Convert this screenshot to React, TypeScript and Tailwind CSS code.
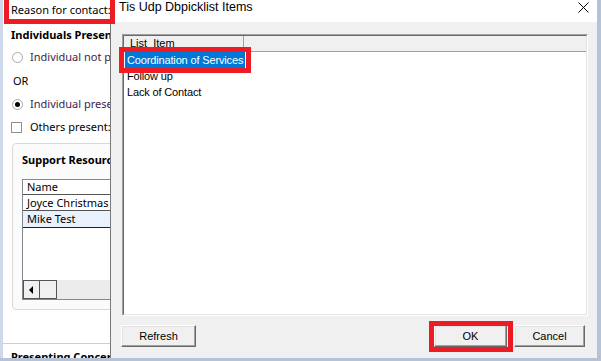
import { ReactNode } from 'react';

const winFont = { fontFamily: '"Liberation Sans", Arial, sans-serif' };
const appFont = { fontFamily: '"Noto Sans", "Open Sans", sans-serif' };

const RedBox = ({ className }: { className: string }) => (
  <div className={`absolute border-[5px] border-[#ed1c24] pointer-events-none ${className}`} />
);

const Radio = ({ checked, label }: { checked?: boolean; label: string }) => (
  <div className="flex items-center h-[16px] leading-[16px]">
    <span className="ml-[9px] w-[11px] h-[11px] rounded-full border border-[#a9a9a9] bg-white flex items-center justify-center">
      {checked && <span className="w-[5px] h-[5px] rounded-full bg-black" />}
    </span>
    <span className="ml-[7px] text-[#3a2552] whitespace-nowrap">{label}</span>
  </div>
);

const WinButton = ({ children, className }: { children: ReactNode; className: string }) => (
  <button
    className={`h-[22px] bg-[#f0f0f0] border-t border-l border-white border-r border-b border-r-[#696969] border-b-[#696969] shadow-[inset_-1px_-1px_0_#a0a0a0,inset_1px_1px_0_#e3e3e3] text-[11px] text-black ${className}`}>
    {children}
  </button>
);

const BackgroundForm = () => {
  const people = ['Joyce Christmas', 'Mike Test'];
  return (
    <div
      className="flex-1 h-[358px] bg-white flex flex-col [&>*]:shrink-0 text-[11px] text-black overflow-hidden"
      style={appFont}>
      <div className="h-[24px] pt-[2px] pl-[8px] leading-[16px] whitespace-nowrap">Reason for contact:</div>
      <div className="mt-[3px] pl-[8px] leading-[16px] font-bold whitespace-nowrap">Individuals Present</div>
      <div className="mt-[6px]">
        <Radio label="Individual not present" />
      </div>
      <div className="mt-[8px] pl-[10px] leading-[16px]">OR</div>
      <div className="mt-[7px]">
        <Radio checked label="Individual present" />
      </div>
      <div className="mt-[7px] flex items-center h-[16px] leading-[16px]">
        <span className="ml-[8px] w-[11px] h-[11px] border border-[#8f8f8f] bg-white" />
        <span className="ml-[8px] whitespace-nowrap">Others present:</span>
      </div>
      <div className="mt-[8px] ml-[9px] h-[167px] w-[200px] rounded-[4px] border border-[#d9d9d9] bg-[#fbfbfb] pt-[8px] pl-[9px]">
        <div className="leading-[16px] font-bold whitespace-nowrap">Support Resources</div>
        <div className="mt-[11px] h-[121px] border border-[#828790] bg-white flex flex-col">
          <div className="h-[15px] leading-[14px] pl-[4px] border-b border-[#555]">Name</div>
          <div className="h-[16px] leading-[15px] pl-[4px] border-b border-[#555] whitespace-nowrap">{people[0]}</div>
          <div className="h-[17px] leading-[15px] pl-[4px] border-b border-[#222] bg-[#e8f1fc] whitespace-nowrap">
            {people[1]}
          </div>
          <div className="flex-1" />
          <div className="h-[19px] flex bg-[#ececec]">
            <div className="w-[17px] border border-[#555] bg-[#f0f0f0] flex items-center justify-center">
              <svg width="5" height="8" viewBox="0 0 5 8">
                <path d="M4 0 L0 4 L4 8 Z" fill="#000" />
              </svg>
            </div>
            <div className="w-[17px] border-y border-r border-[#555] bg-[#f0f0f0]" />
          </div>
        </div>
      </div>
      <div className="mt-[33px] border-t border-[#cfcfcf] h-0" />
      <div className="mt-[5px] pl-[8px] leading-[16px] font-bold whitespace-nowrap">Presenting Concerns</div>
    </div>
  );
};

const PicklistDialog = () => {
  const items = ['Coordination of Services', 'Follow up', 'Lack of Contact'];
  return (
    <div
      className="absolute left-[110px] top-0 w-[487px] h-[358px] bg-[#f0f0f0] border-l border-[#7a7a7a] flex flex-col"
      style={winFont}>
      <div className="h-[22px] bg-white flex items-start justify-between shrink-0">
        <span className="pl-[8px] text-[12.5px] leading-[15px] text-black whitespace-nowrap">Tis Udp Dbpicklist Items</span>
        <svg className="mt-[2px] mr-[8px]" width="11" height="11" viewBox="0 0 11 11">
          <path d="M0.5 0.5 L10.5 10.5 M10.5 0.5 L0.5 10.5" stroke="#000" strokeWidth="1" />
        </svg>
      </div>
      <div className="ml-[11px] mr-[9px] mt-[12px] h-[282px] border-t border-l border-[#a0a0a0] border-r border-b border-r-white border-b-white shrink-0">
        <div className="h-full border-t border-l border-[#696969] border-r border-b border-r-[#e3e3e3] border-b-[#e3e3e3] bg-white flex flex-col text-[11px] text-black">
          <div className="h-[16px] flex bg-[#f0f0f0] border-b border-[#a0a0a0] shrink-0">
            <div className="w-[120px] border-r border-[#a0a0a0] pl-[6px] leading-[14px]">List_Item</div>
          </div>
          {items.map((item, index) => (
            <div key={item} className="h-[16px] pl-[1px] flex shrink-0">
              <span
                className={`w-[120px] pl-[2px] leading-[16px] tracking-[-0.15px] whitespace-nowrap ${
                  index === 0 ? 'bg-[#0078d7] text-white' : 'text-black'
                }`}>
                {item}
              </span>
            </div>
          ))}
        </div>
      </div>
      <div className="mt-[9px] flex items-start pl-[10px] pr-[12px]">
        <WinButton className="w-[75px]">Refresh</WinButton>
        <div className="flex-1" />
        <WinButton className="w-[73px]">OK</WinButton>
        <WinButton className="w-[71px] ml-[7px]">Cancel</WinButton>
      </div>
    </div>
  );
};

export default function App() {
  return (
    <div className="relative w-[601px] h-[361px] overflow-hidden bg-[#b7c2d9] flex items-start">
      <div className="w-[3px] h-[358px] bg-[#cdd8ea]" />
      <BackgroundForm />
      <div className="w-[4px]" />
      <PicklistDialog />
      <RedBox className="left-[4px] top-[-5px] w-[111px] h-[29px]" />
      <RedBox className="left-[119px] top-[47px] w-[132px] h-[26px]" />
      <RedBox className="left-[429px] top-[321px] w-[84px] h-[31px]" />
    </div>
  );
}
